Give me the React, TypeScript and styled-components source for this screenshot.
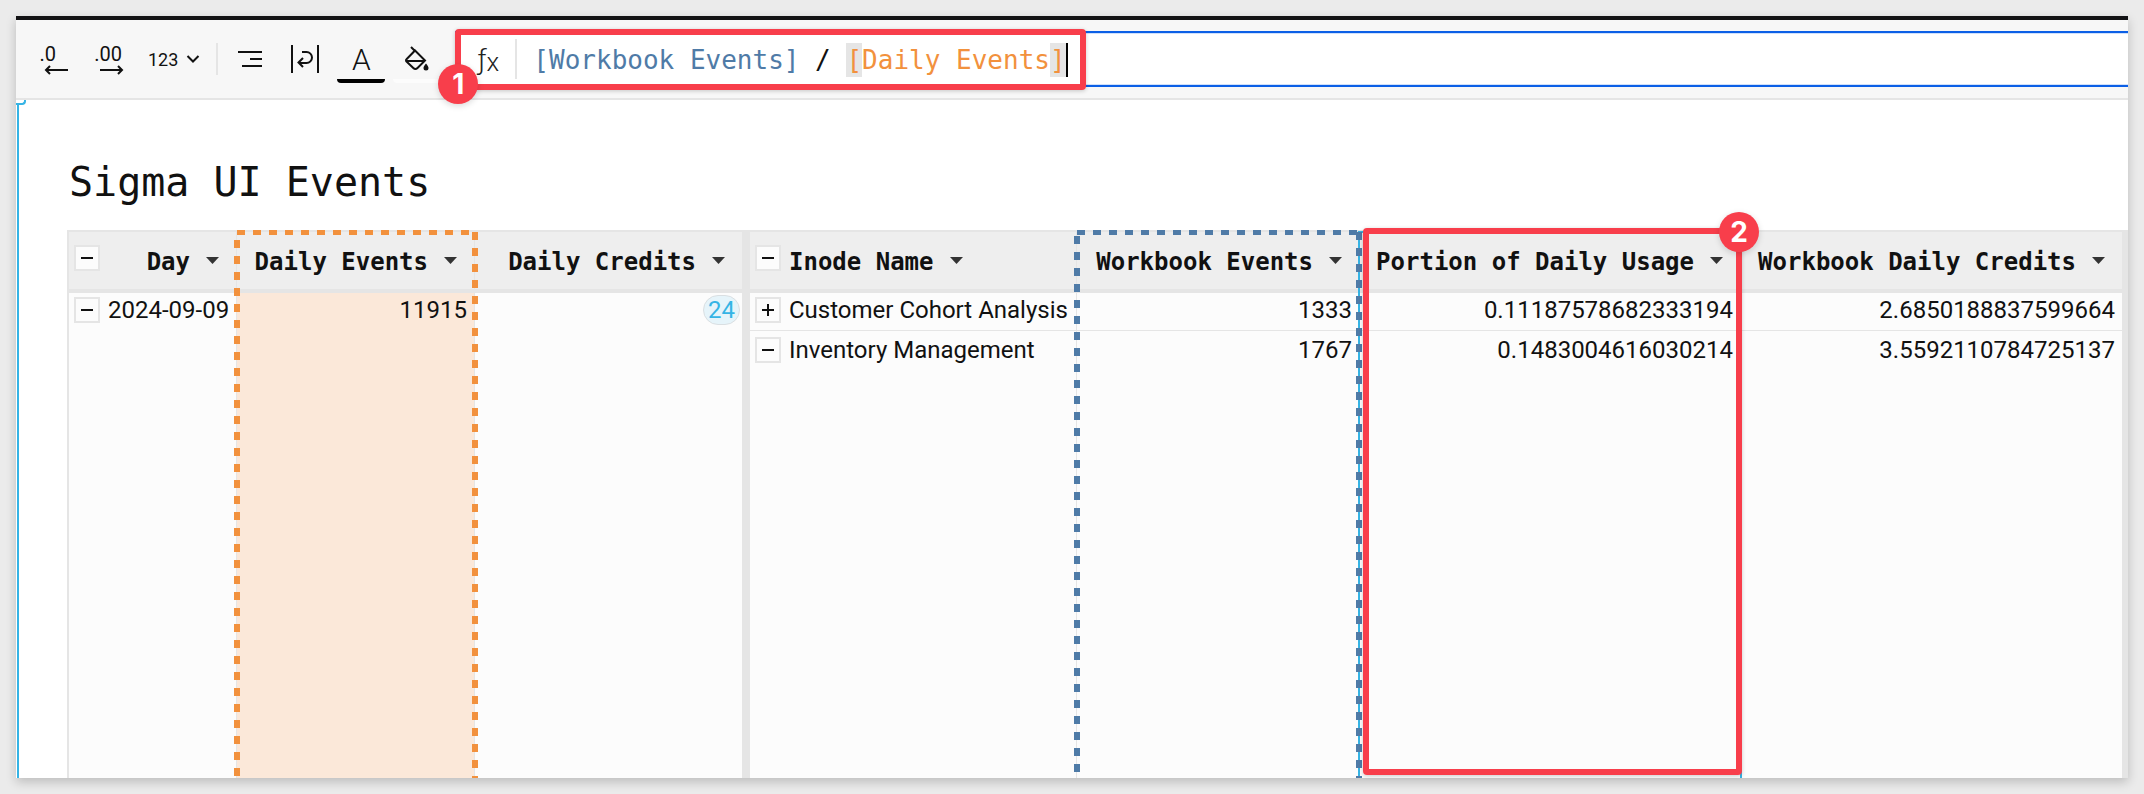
import React from "react";
import styled, { createGlobalStyle, css } from "styled-components";

const color = {
  page: "#ebebeb",
  bar: "#f7f7f7",
  line: "#e5e5e5",
  header: "#eeeeee",
  cell: "#fcfcfc",
  ink: "#111111",
  orange: "#f2913d",
  orangeTint: "#fbe8d9",
  blue: "#4f7ba7",
  cyan: "#36b4e5",
  focus: "#0b5fe6",
  red: "#f83e4b",
};

const sans = `Roboto, "Liberation Sans", sans-serif`;
const mono = `"DejaVu Sans Mono", "Liberation Mono", monospace`;

const GlobalStyle = createGlobalStyle`
  * { box-sizing: border-box; }
  body { margin: 0; background: ${color.page}; color: ${color.ink}; font-family: ${sans}; }
  button { font: inherit; color: inherit; border: 0; background: none; padding: 0; cursor: pointer; }
  svg { display: block; fill: none; stroke: currentColor; }
`;

const Page = styled.div`
  height: 100vh;
  min-height: 480px;
  padding: 16px;
  display: flex;
`;

const Card = styled.main`
  flex: 1;
  min-width: 0;
  display: flex;
  flex-direction: column;
  background: #fff;
  border-top: 4px solid #121214;
  box-shadow: 0 4px 10px rgba(0, 0, 0, 0.2);
`;

/* Toolbar */

const Toolbar = styled.header`
  display: flex;
  align-items: center;
  height: 80px;
  padding-left: 20px;
  background: ${color.bar};
  border-bottom: 2px solid ${color.line};
`;

const Tools = styled.div`
  display: flex;
  align-items: center;
  gap: 24px;
`;

const Swatches = styled.div`
  display: flex;
  gap: 8px;
  margin: 0 14px 0 18px;
`;

const Tool = styled.button`
  display: flex;
  align-items: center;
  justify-content: center;
  height: 48px;
`;

const DecimalTool = styled(Tool)`
  flex-direction: column;
  align-items: flex-end;
  width: 32px;
`;

const Digits = styled.span<{ $inset?: boolean }>`
  font-size: 20px;
  line-height: 22px;
  padding-right: ${(p) => (p.$inset ? 12 : 2)}px;
`;

const FormatTool = styled(Tool)`
  gap: 8px;
  font-size: 18px;
`;

const ToolDivider = styled.span`
  width: 2px;
  height: 32px;
  margin: 0 -5px 0 -8px;
  background: ${color.line};
`;

const SwatchTool = styled(Tool)<{ $swatch: string }>`
  position: relative;
  width: 48px;
  font-size: 30px;
  font-weight: 300;
  &::after {
    content: "";
    position: absolute;
    left: 0;
    right: 0;
    bottom: 0;
    height: 4px;
    border-radius: 0 0 4px 4px;
    background: ${(p) => p.$swatch};
  }
`;

/* Formula bar */

const FormulaBar = styled.div`
  flex: 1;
  height: 56px;
  display: flex;
  background: #fff;
  border-top: 2px solid ${color.focus};
  border-bottom: 2px solid ${color.focus};
  box-shadow: inset 0 1px 0 #cfe0fb, inset 0 -1px 0 #cfe0fb;
`;

const FormulaArea = styled.div`
  position: relative;
  display: flex;
  align-items: center;
  padding-right: 20px;
`;

const FxLabel = styled.label`
  display: flex;
  align-items: center;
  justify-content: center;
  width: 62px;
  height: 40px;
  padding-left: 6px;
  font-size: 28px;
  font-weight: 300;
  color: #222;
  border-right: 2px solid ${color.line};
  sub {
    font-size: 26px;
    line-height: 20px;
    vertical-align: -2px;
  }
`;

const Formula = styled.div`
  padding: 2px 0 0 16px;
  font-family: ${mono};
  font-size: 26px;
  line-height: 34px;
  white-space: pre;
  outline: none;
`;

const Ref = styled.span<{ $color: string }>`
  color: ${(p) => p.$color};
`;

const Bracket = styled.span`
  display: inline-block;
  background: ${color.line};
`;

const Caret = styled.span`
  display: inline-block;
  width: 2px;
  height: 34px;
  margin-right: -2px;
  vertical-align: bottom;
  background: #000;
`;

/* Annotations */

const callout = css`
  position: absolute;
  border: 6px solid ${color.red};
  border-radius: 4px;
  box-shadow: 0 1px 4px rgba(0, 0, 0, 0.2);
  pointer-events: none;
`;

const FormulaCallout = styled.div`
  ${callout}
  inset: -4px 0 -5px 0;
`;

const ColumnCallout = styled.div`
  ${callout}
  top: -2px;
  bottom: 3px;
  left: 1296px;
  width: 379px;
`;

const Badge = styled.span<{ $corner: "start" | "end" }>`
  position: absolute;
  ${(p) => (p.$corner === "start" ? "left: -23px; bottom: -20px;" : "right: -23px; top: -22px;")}
  width: 40px;
  height: 40px;
  border-radius: 20px;
  background: ${color.red};
  box-shadow: 0 2px 6px rgba(0, 0, 0, 0.15);
  color: #fff;
  font: 700 28px/40px Inter, ${sans};
  text-align: center;
`;

/* Canvas */

const Canvas = styled.section`
  position: relative;
  flex: 1;
  min-height: 0;
  display: flex;
  flex-direction: column;
  margin-left: 1px;
  padding: 58px 0 0 48px;
  border-left: 2px solid ${color.cyan};
`;

const CornerTab = styled.span`
  position: absolute;
  top: 0;
  left: -3px;
  width: 10px;
  height: 5px;
  background: #fff;
  border: solid ${color.cyan};
  border-width: 0 2px 2px 0;
  border-radius: 0 0 4px 0;
`;

const Title = styled.h1`
  margin: 0 0 24px;
  padding-left: 2px;
  font: 400 40px/48px ${mono};
`;

const TableArea = styled.div`
  position: relative;
  flex: 1;
  min-height: 0;
`;

const Frame = styled.div`
  height: 100%;
  border: solid ${color.line};
  border-width: 2px 6px 0 2px;
`;

const Table = styled.table`
  width: 100%;
  height: 100%;
  table-layout: fixed;
  border-collapse: separate;
  border-spacing: 0;
  font-size: 24px;
  line-height: 26px;
`;

const Col = styled.col<{ $width?: number }>`
  width: ${(p) => (p.$width ? `${p.$width}px` : "auto")};
`;

const cellEdge = css<{ $frozen?: boolean; $last?: boolean }>`
  border-right: ${(p) => (p.$last ? 0 : p.$frozen ? 8 : 1)}px solid ${color.line};
`;

const Th = styled.th<{ $frozen?: boolean; $last?: boolean }>`
  ${cellEdge}
  height: 59px;
  padding: 0;
  background: ${color.header};
  border-bottom: 2px solid ${color.line};
  font-family: ${mono};
  font-weight: 700;
`;

const HeadRow = styled.div<{ $start?: boolean }>`
  display: flex;
  align-items: center;
  justify-content: flex-end;
  padding: 0 17px 0 5px;
  ${(p) => p.$start && "justify-content: flex-start;"}
`;

const HeadLabel = styled.span`
  padding-top: 2px;
  white-space: nowrap;
`;

const MenuButton = styled.button`
  margin-left: 16px;
  color: #333;
`;

const Toggle = styled.button<{ $head?: boolean }>`
  flex: none;
  display: flex;
  align-items: center;
  justify-content: center;
  width: 26px;
  height: 26px;
  margin-right: ${(p) => (p.$head ? "auto" : "8px")};
  ${(p) => p.$head && "margin-bottom: 6px;"}
  background: ${color.cell};
  border: 2px solid ${color.line};
`;

const StartToggle = styled(Toggle)`
  margin-right: 8px;
`;

const Td = styled.td<{ $frozen?: boolean; $last?: boolean; $tint?: boolean; $ruled?: boolean; $top?: boolean }>`
  ${cellEdge}
  height: 40px;
  padding: 6px 7px 7px 5px;
  vertical-align: top;
  text-align: right;
  white-space: nowrap;
  background: ${(p) => (p.$tint ? color.orangeTint : color.cell)};
  ${(p) => p.$ruled && `border-bottom: 1px solid ${color.line};`}
  ${(p) => p.$top && `box-shadow: inset 0 2px 0 ${color.line};`}
`;

const Filler = styled.td<{ $last?: boolean }>`
  ${cellEdge}
  padding: 0;
  background: ${color.cell};
`;

const Entry = styled.div`
  display: flex;
  align-items: center;
`;

const PillCell = styled(Td)`
  padding: 4px 2px 7px 5px;
`;

const Pill = styled.span`
  display: inline-block;
  padding: 0 4px;
  line-height: 28px;
  border: 1px solid #dadfe2;
  border-radius: 15px;
  background: #e6f4fa;
  color: ${color.cyan};
`;

const dashes = (dir: string, c: string) =>
  `repeating-linear-gradient(${dir}, ${c} 0 8px, transparent 8px 16px)`;

const DashedOutline = styled.div<{ $left: number; $width: number; $color: string; $lead: number }>`
  position: absolute;
  top: 0;
  bottom: 0;
  left: ${(p) => p.$left}px;
  width: ${(p) => p.$width}px;
  pointer-events: none;
  background:
    ${(p) => dashes("to right", p.$color)} 3px 0 / calc(100% - 6px) 5px no-repeat,
    ${(p) => dashes("to bottom", p.$color)} 0 ${(p) => p.$lead}px / 6px 100% no-repeat,
    ${(p) => dashes("to bottom", p.$color)} 100% 2px / 6px 100% no-repeat;
`;

const SelectedColumn = styled.div`
  position: absolute;
  top: 1px;
  bottom: 0;
  left: 1291px;
  width: 384px;
  border: 2px solid ${color.cyan};
  border-bottom: 0;
  pointer-events: none;
`;

const Arrow = ({ left }: { left?: boolean }) => (
  <svg width="24" height="10" viewBox="0 0 24 10" strokeWidth="2">
    {left ? <path d="M24 5H2M6 1L2 5l4 4" /> : <path d="M0 5h22M18 1l4 4-4 4" />}
  </svg>
);

const ToggleIcon = ({ plus }: { plus?: boolean }) => (
  <svg width="12" height="12" viewBox="0 0 12 12" strokeWidth="2">
    <path d={plus ? "M0 6h12M6 0v12" : "M0 6h12"} />
  </svg>
);

type Column = {
  name: string;
  width?: number;
  frozen?: boolean;
  toggle?: boolean;
  start?: boolean;
};

const columns: Column[] = [
  { name: "Day", width: 168, toggle: true },
  { name: "Daily Events", width: 238 },
  { name: "Daily Credits", width: 275, frozen: true },
  { name: "Inode Name", width: 327, toggle: true, start: true },
  { name: "Workbook Events", width: 283 },
  { name: "Portion of Daily Usage", width: 381 },
  { name: "Workbook Daily Credits" },
];

const Heading = ({ column, last }: { column: Column; last: boolean }) => {
  const HeadToggle = column.start ? StartToggle : Toggle;
  return (
    <Th scope="col" $frozen={column.frozen} $last={last}>
      <HeadRow $start={column.start}>
        {column.toggle && (
          <HeadToggle $head aria-label={`Collapse ${column.name}`}>
            <ToggleIcon />
          </HeadToggle>
        )}
        <HeadLabel>{column.name}</HeadLabel>
        <MenuButton aria-label={`${column.name} menu`}>
          <svg width="13" height="7" viewBox="0 0 13 7">
            <path d="M0 0h13L6.500 7z" fill="currentColor" stroke="none" />
          </svg>
        </MenuButton>
      </HeadRow>
    </Th>
  );
};

export default function App() {
  return (
    <Page>
      <GlobalStyle />
      <Card>
        <Toolbar>
          <Tools>
            <DecimalTool aria-label="Decrease decimal places">
              <Digits $inset>.0</Digits>
              <Arrow left />
            </DecimalTool>
            <DecimalTool aria-label="Increase decimal places">
              <Digits>.00</Digits>
              <Arrow />
            </DecimalTool>
            <FormatTool aria-label="Number format">
              123
              <svg width="14" height="8" viewBox="0 0 14 8" strokeWidth="2">
                <path d="M1.500 1L7 6.500 12.500 1" />
              </svg>
            </FormatTool>
            <ToolDivider />
            <Tool aria-label="Align right">
              <svg width="30" height="28" viewBox="0 0 30 28" strokeWidth="2">
                <path d="M1 7h24M13 14h12M5 21h20" />
              </svg>
            </Tool>
            <Tool aria-label="Wrap text">
              <svg width="28" height="28" viewBox="0 0 28 28" strokeWidth="2">
                <path d="M1 0v28M27 0v28M11 7h4.500a5 5 0 0 1 0 11H8M12 13l-4.500 4.500L12 22" />
              </svg>
            </Tool>
          </Tools>
          <Swatches>
            <SwatchTool $swatch="#000" aria-label="Text color">
              A
            </SwatchTool>
            <SwatchTool $swatch="#fcfcfc" aria-label="Fill color">
              <svg width="24" height="28" viewBox="0 0 24 28" strokeWidth="2">
                <path d="M6 2l4 4M10 5.500L20 15.500l-7.500 7.500a3 3 0 0 1-4.200 0L1.500 16.500a1.500 1.500 0 0 1 0-2.200zM1 16h19" />
                <path d="M21 18.500c1.500 2 2.500 3.200 2.500 4.500a2.500 2.500 0 0 1-5 0c0-1.300 1-2.500 2.500-4.500z" fill="currentColor" stroke="none" />
              </svg>
            </SwatchTool>
          </Swatches>
          <FormulaBar>
            <FormulaArea>
              <FxLabel id="formula-label">
                <span>
                  ƒ<sub>x</sub>
                </span>
              </FxLabel>
              <Formula
                role="textbox"
                aria-labelledby="formula-label"
                contentEditable
                suppressContentEditableWarning
                spellCheck={false}
              >
                <Ref $color={color.blue}>[Workbook Events]</Ref>
                {" / "}
                <Ref $color={color.orange}>
                  <Bracket>[</Bracket>Daily Events<Bracket>]</Bracket>
                </Ref>
                <Caret />
              </Formula>
              <FormulaCallout>
                <Badge $corner="start">1</Badge>
              </FormulaCallout>
            </FormulaArea>
          </FormulaBar>
        </Toolbar>
        <Canvas>
          <CornerTab />
          <Title>Sigma UI Events</Title>
          <TableArea>
            <Frame>
              <Table>
                <colgroup>
                  {columns.map((c) => (
                    <Col key={c.name} $width={c.width} />
                  ))}
                </colgroup>
                <thead>
                  <tr>
                    {columns.map((c, i) => (
                      <Heading key={c.name} column={c} last={i === columns.length - 1} />
                    ))}
                  </tr>
                </thead>
                <tbody>
                  <tr>
                    <Td rowSpan={3} $top>
                      <Entry>
                        <Toggle aria-label="Collapse 2024-09-09">
                          <ToggleIcon />
                        </Toggle>
                        2024-09-09
                      </Entry>
                    </Td>
                    <Td rowSpan={3} $top $tint>
                      11915
                    </Td>
                    <PillCell rowSpan={3} $top $frozen>
                      <Pill>24</Pill>
                    </PillCell>
                    <Td $top $ruled>
                      <Entry>
                        <Toggle aria-label="Expand Customer Cohort Analysis">
                          <ToggleIcon plus />
                        </Toggle>
                        Customer Cohort Analysis
                      </Entry>
                    </Td>
                    <Td $top $ruled>1333</Td>
                    <Td $top $ruled>0.11187578682333194</Td>
                    <Td $top $ruled $last>2.6850188837599664</Td>
                  </tr>
                  <tr>
                    <Td>
                      <Entry>
                        <Toggle aria-label="Collapse Inventory Management">
                          <ToggleIcon />
                        </Toggle>
                        Inventory Management
                      </Entry>
                    </Td>
                    <Td>1767</Td>
                    <Td>0.1483004616030214</Td>
                    <Td $last>3.5592110784725137</Td>
                  </tr>
                  <tr>
                    <Filler />
                    <Filler />
                    <Filler />
                    <Filler $last />
                  </tr>
                </tbody>
              </Table>
            </Frame>
            <SelectedColumn />
            <DashedOutline $left={167} $width={244} $color={color.orange} $lead={10} />
            <DashedOutline $left={1007} $width={288} $color={color.blue} $lead={6} />
            <ColumnCallout>
              <Badge $corner="end">2</Badge>
            </ColumnCallout>
          </TableArea>
        </Canvas>
      </Card>
    </Page>
  );
}
